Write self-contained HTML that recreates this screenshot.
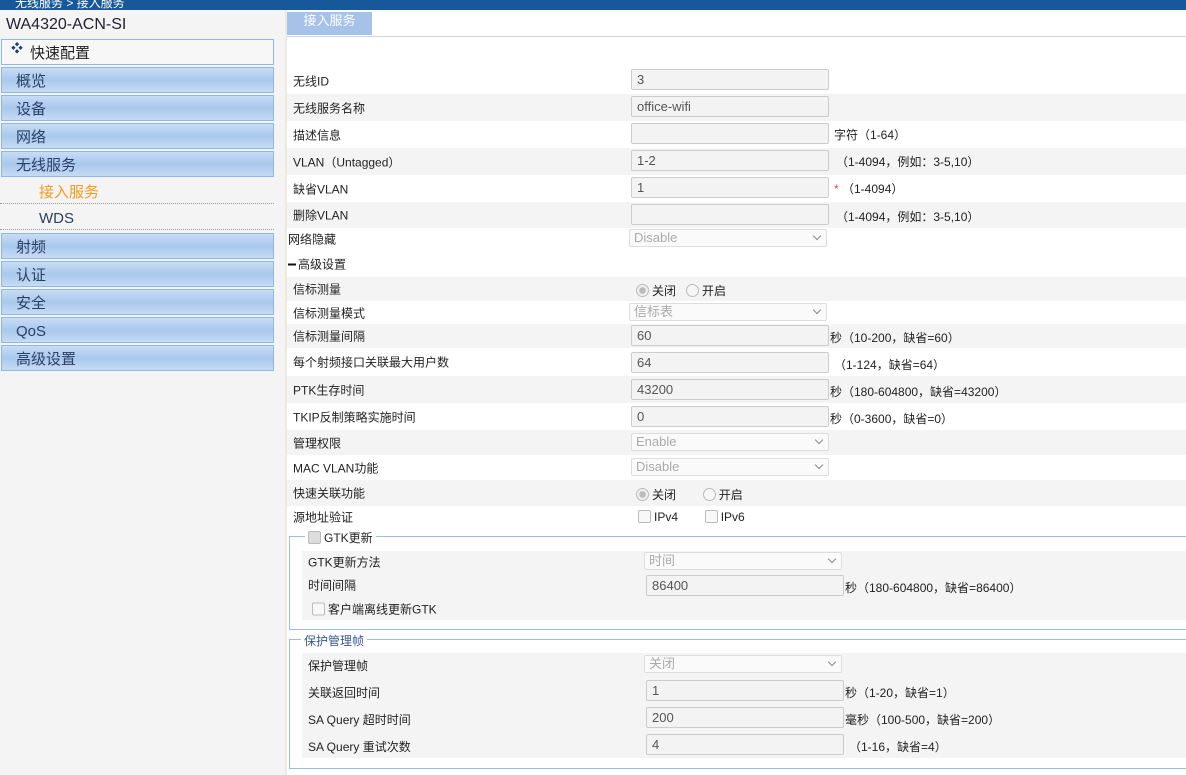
<!DOCTYPE html>
<html><head><meta charset="utf-8"><style>
*{margin:0;padding:0;box-sizing:border-box}
body{width:1186px;height:775px;overflow:hidden;background:#fff;font-family:"Liberation Sans","Noto Sans CJK SC",sans-serif;font-size:12px;color:#222;position:relative}
.a{position:absolute}
#top{left:0;top:0;width:1186px;height:10px;background:#17589a;color:#fff;font-size:12px;line-height:6px;padding-left:15px;overflow:hidden}
#side{left:0;top:10px;width:279px;height:765px;background:#f4f4f4}
.m{position:absolute;left:1px;width:273px;height:26px;border:1px solid #8fb8e6;background:linear-gradient(#c9dcf4,#a9c8ec 50%,#c6dbf4);font-size:15px;color:#2a3f66;padding-left:14px;line-height:28px}
.sub{position:absolute;left:0;width:274px;height:25px;border-bottom:1px dotted #999;font-size:15px;padding-left:39px;line-height:28px}
.r{position:absolute;left:287px;right:0;line-height:normal}
.g{background:#f4f4f4}
.l{position:absolute;left:6px;top:50%;transform:translateY(-50%);white-space:nowrap}
.i{position:absolute;width:198px;height:21px;border:1px solid #ccc;background:#f3f3f3;border-radius:2px;color:#555;padding-left:5px;line-height:19px;font-size:13px}
.s{position:absolute;width:198px;height:18px;border:1px solid #ddd;background:#fafafa;border-radius:2px;color:#aaa;padding-left:4px;line-height:16px;font-size:13px}
.s:after{content:"";position:absolute;right:6px;top:3px;width:5px;height:5px;border-right:1.5px solid #888;border-bottom:1.5px solid #888;transform:rotate(45deg)}
.h{position:absolute;white-space:nowrap;color:#222}
.rd{display:inline-block;width:13px;height:13px;border:1px solid #bbb;border-radius:50%;background:#f6f6f6;vertical-align:-2px;margin-right:3px}
.rd.on{background:radial-gradient(#bbb 40%,#f0f0f0 45%)}
.cb{display:inline-block;width:13px;height:13px;border:1px solid #bbb;border-radius:2px;background:#f8f8f8;vertical-align:-2px;margin-right:3px}
fieldset{position:absolute;left:289px;right:-5px;border:1px solid #9dbde6}
</style></head><body>
<div id="top" class="a">无线服务 &gt; 接入服务</div>
<div id="side" class="a">
<div class="a" style="left:6px;top:6px;font-size:16px;color:#223">WA4320-ACN-SI</div>
<div class="a" style="left:1px;top:29px;width:273px;height:26px;border:1px solid #8fb8e6;background:#f7f7f7;font-size:15px;line-height:28px;padding-left:28px">快速配置<span class="a" style="left:9px;top:-6px;font-size:12px;color:#1b3c7a">❖</span></div>
<div class="m" style="top:57px">概览</div>
<div class="m" style="top:85px">设备</div>
<div class="m" style="top:113px">网络</div>
<div class="m" style="top:141px">无线服务</div>
<div class="sub" style="top:169px;color:#f59a1a">接入服务</div>
<div class="sub" style="top:195px;color:#2a3f66">WDS</div>
<div class="m" style="top:223px">射频</div>
<div class="m" style="top:251px">认证</div>
<div class="m" style="top:279px">安全</div>
<div class="m" style="top:307px">QoS</div>
<div class="m" style="top:335px">高级设置</div>
</div>
<div class="a" style="left:279px;top:10px;width:6px;height:765px;background:#f4f4f4"></div>
<div class="a" style="left:285px;top:10px;width:2px;height:765px;background:#efe9dc"></div>
<div class="a" style="left:287px;top:12px;width:85px;height:23px;background:#a7c2e8;color:#fff;font-size:13px;text-align:center;line-height:18px">接入服务</div>
<div class="a" style="left:287px;top:36px;width:899px;height:1px;background:#c7d8ee"></div>

<div class="r" style="top:67px;height:27px"><span class="l">无线ID</span></div>
<div class="r g" style="top:94px;height:27px"><span class="l">无线服务名称</span></div>
<div class="r" style="top:121px;height:27px"><span class="l">描述信息</span></div>
<div class="r g" style="top:148px;height:27px"><span class="l">VLAN（Untagged）</span></div>
<div class="r" style="top:175px;height:27px"><span class="l">缺省VLAN</span></div>
<div class="r g" style="top:202px;height:26px"><span class="l">删除VLAN</span></div>
<div class="r" style="top:228px;height:22px"><span class="l" style="left:1px">网络隐藏</span></div>
<div class="r" style="top:250px;height:27px"><span class="l" style="left:1px"><b style="display:inline-block;width:8px;height:2px;background:#111;vertical-align:3px;margin-right:2px"></b>高级设置</span></div>
<div class="r g" style="top:277px;height:24px"><span class="l">信标测量</span></div>
<div class="r" style="top:301px;height:23px"><span class="l">信标测量模式</span></div>
<div class="r g" style="top:324px;height:24px"><span class="l">信标测量间隔</span></div>
<div class="r" style="top:348px;height:28px"><span class="l">每个射频接口关联最大用户数</span></div>
<div class="r g" style="top:376px;height:27px"><span class="l">PTK生存时间</span></div>
<div class="r" style="top:403px;height:27px"><span class="l">TKIP反制策略实施时间</span></div>
<div class="r g" style="top:430px;height:25px"><span class="l">管理权限</span></div>
<div class="r" style="top:455px;height:25px"><span class="l">MAC VLAN功能</span></div>
<div class="r g" style="top:480px;height:26px"><span class="l">快速关联功能</span></div>
<div class="r" style="top:506px;height:22px"><span class="l">源地址验证</span></div>

<div class="i" style="left:631px;top:69px">3</div>
<div class="i" style="left:631px;top:96px">office-wifi</div>
<div class="i" style="left:631px;top:123px"></div><span class="h" style="left:834px;top:126px">字符（1-64）</span>
<div class="i" style="left:631px;top:150px">1-2</div><span class="h" style="left:836px;top:153px">（1-4094，例如：3-5,10）</span>
<div class="i" style="left:631px;top:177px">1</div><span class="h" style="left:834px;top:180px"><span style="color:#e44">*</span> （1-4094）</span>
<div class="i" style="left:631px;top:204px"></div><span class="h" style="left:836px;top:208px">（1-4094，例如：3-5,10）</span>
<div class="s" style="left:629px;top:229px">Disable</div>
<span class="h" style="left:636px;top:282px"><i class="rd on"></i>关闭 &nbsp; <i class="rd"></i>开启</span>
<div class="s" style="left:629px;top:303px">信标表</div>
<div class="i" style="left:631px;top:325px">60</div><span class="h" style="left:830px;top:329px">秒（10-200，缺省=60）</span>
<div class="i" style="left:631px;top:352px">64</div><span class="h" style="left:834px;top:356px">（1-124，缺省=64）</span>
<div class="i" style="left:631px;top:379px">43200</div><span class="h" style="left:830px;top:383px">秒（180-604800，缺省=43200）</span>
<div class="i" style="left:631px;top:406px">0</div><span class="h" style="left:830px;top:410px">秒（0-3600，缺省=0）</span>
<div class="s" style="left:631px;top:433px">Enable</div>
<div class="s" style="left:631px;top:458px">Disable</div>
<span class="h" style="left:636px;top:486px"><i class="rd on"></i>关闭 &nbsp; &nbsp; &nbsp; &nbsp;<i class="rd"></i>开启</span>
<span class="h" style="left:638px;top:510px"><i class="cb"></i>IPv4 &nbsp; &nbsp; &nbsp; &nbsp;<i class="cb"></i>IPv6</span>

<fieldset style="top:536px;height:94px"></fieldset>
<div class="a" style="left:305px;top:529px;background:#fff;padding:0 3px;font-size:12px"><i class="cb" style="background:#ddd"></i>GTK更新</div>
<div class="r g" style="left:302px;top:551px;height:22px"><span class="l">GTK更新方法</span></div>
<div class="r g" style="left:302px;top:573px;height:24px"><span class="l">时间间隔</span></div>
<div class="r g" style="left:302px;top:597px;height:23px"><span class="l" style="left:10px"><i class="cb"></i>客户端离线更新GTK</span></div>
<div class="s" style="left:644px;top:552px">时间</div>
<div class="i" style="left:646px;top:575px">86400</div><span class="h" style="left:845px;top:579px">秒（180-604800，缺省=86400）</span>

<fieldset style="top:639px;height:130px"></fieldset>
<div class="a" style="left:301px;top:632px;background:#fff;padding:0 3px;color:#3a5a8a">保护管理帧</div>
<div class="r g" style="left:302px;top:653px;height:105px"></div>
<span class="h" style="left:308px;top:657px">保护管理帧</span>
<span class="h" style="left:308px;top:684px">关联返回时间</span>
<span class="h" style="left:308px;top:711px">SA Query 超时时间</span>
<span class="h" style="left:308px;top:738px">SA Query 重试次数</span>
<div class="s" style="left:644px;top:655px">关闭</div>
<div class="i" style="left:646px;top:680px">1</div><span class="h" style="left:845px;top:684px">秒（1-20，缺省=1）</span>
<div class="i" style="left:646px;top:707px">200</div><span class="h" style="left:845px;top:711px">毫秒（100-500，缺省=200）</span>
<div class="i" style="left:646px;top:734px">4</div><span class="h" style="left:849px;top:738px">（1-16，缺省=4）</span>
</body></html>
